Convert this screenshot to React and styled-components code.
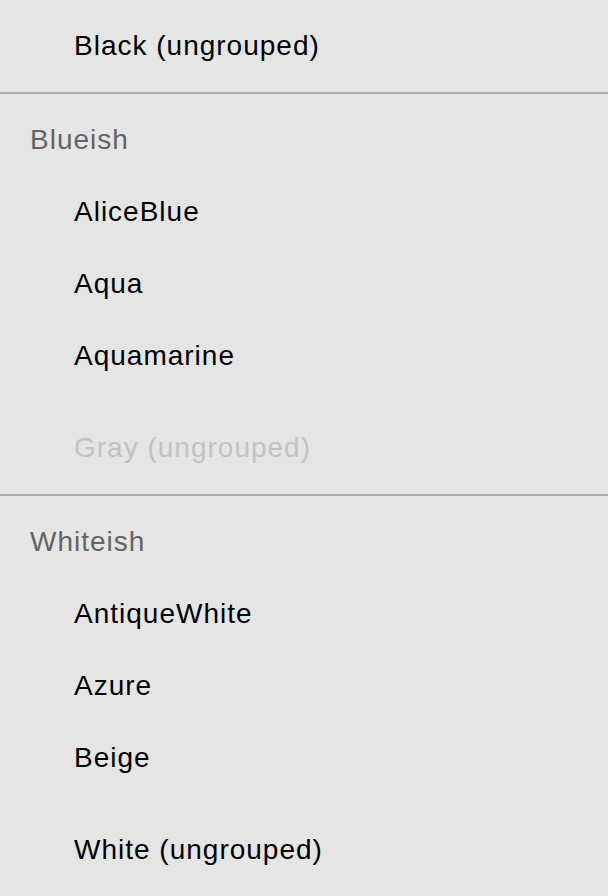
import React from "react";
import styled, { createGlobalStyle } from "styled-components";

const GlobalStyle = createGlobalStyle`
    html, body {
        margin: 0;
        padding: 0;
        background: #e5e5e5;
    }
    body {
        font-family: "Liberation Sans", Arial, sans-serif;
    }
`;

// 목록 데이터
const items = [
    { type: "option", label: "Black (ungrouped)" },
    { type: "separator" },
    {
        type: "group",
        label: "Blueish",
        options: ["AliceBlue", "Aqua", "Aquamarine"],
    },
    { type: "option", label: "Gray (ungrouped)", disabled: true },
    { type: "separator" },
    {
        type: "group",
        label: "Whiteish",
        options: ["AntiqueWhite", "Azure", "Beige"],
    },
    { type: "option", label: "White (ungrouped)" },
];

const App = () => {
    return (
        <>
            <GlobalStyle />
            <ListBox>
                {items.map((item, idx) => {
                    if (item.type === "separator") return <Separator key={idx} />;
                    if (item.type === "group")
                        return (
                            <Group key={idx}>
                                <GroupLabel>{item.label}</GroupLabel>
                                {item.options.map(opt => (
                                    <Option key={opt}>{opt}</Option>
                                ))}
                            </Group>
                        );
                    return (
                        <Option key={idx} disabled={item.disabled}>
                            {item.label}
                        </Option>
                    );
                })}
            </ListBox>
        </>
    );
};

const ListBox = styled.div`
    display: flex;
    flex-direction: column;
    width: 608px;
    min-height: 896px;
    padding-top: 9px;
    box-sizing: border-box;
    background: #e5e5e5;
`;

const Group = styled.div`
    display: flex;
    flex-direction: column;
    margin-bottom: 20px;
`;

const Row = styled.div`
    height: 72px;
    box-sizing: border-box;
    padding-top: 1px;
    line-height: 72px;
    font-size: 28px;
    letter-spacing: 1px;
    white-space: nowrap;
`;

const GroupLabel = styled(Row)`
    padding-left: 30px;
    color: #646464;
`;

const Option = styled(Row)`
    padding-left: 74px;
    color: ${props => (props.disabled ? "#c2c2c2" : "#000")};
`;

const Separator = styled.div`
    height: 2px;
    margin: 11px 0 9px;
    background: #adadad;
`;

export default App;
